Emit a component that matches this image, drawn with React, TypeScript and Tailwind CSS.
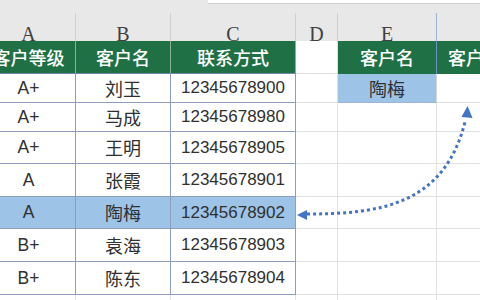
import React from "react";

const GRID = "grid grid-cols-[94px_95px_125px_42px_99px_100px]";
const cjk = { fontFamily: '"Noto Sans CJK SC", "Noto Sans", sans-serif' };
const lat = { fontFamily: '"Liberation Sans", Arial, "Noto Sans CJK SC", sans-serif' };

const rows: { g: string; n: string; p: string; h: string; sel?: boolean; e?: string }[] = [
  { g: "A+", n: "刘玉", p: "12345678900", h: "h-[29px]", e: "陶梅" },
  { g: "A+", n: "马成", p: "12345678980", h: "h-[29px]" },
  { g: "A+", n: "王明", p: "12345678905", h: "h-[32px]" },
  { g: "A", n: "张霞", p: "12345678901", h: "h-[33px]" },
  { g: "A", n: "陶梅", p: "12345678902", h: "h-[32px]", sel: true },
  { g: "B+", n: "袁海", p: "12345678903", h: "h-[33px]" },
  { g: "B+", n: "陈东", p: "12345678904", h: "h-[33px]" },
];

export default function App() {
  const letters = ["A", "B", "C", "D", "E", "F"];
  return (
    <div className="relative w-[480px] h-[300px] overflow-hidden bg-white">
      <div className="ml-[-18px] w-[555px]">
        {/* top strip */}
        <div className="flex h-[4px] bg-[#e8e8e8]">
          <div className="w-[226px]" />
          <div className="flex-1 bg-white border-b border-[#cfcfcf]" />
        </div>
        {/* column letters */}
        <div className={`${GRID} h-[37px] bg-[#e8e8e8]`}>
          {letters.map((l) => (
            <div key={l} className="flex flex-col">
              <div className="h-[9px]" />
              <div
                className={`flex-1 flex items-center justify-center pt-[6px] border-r ${l === "E" ? "border-[#9fb2d4]" : "border-[#d0d0d0]"} text-[20px] text-[#404040]`}
                style={{ fontFamily: '"Liberation Serif", "DejaVu Serif", serif' }}
              >
                {l}
              </div>
            </div>
          ))}
        </div>
        {/* green header */}
        <div className={`${GRID} h-[33px]`} style={cjk}>
          {["客户等级", "客户名", "联系方式"].map((t) => (
            <div
              key={t}
              className="bg-[#1f7145] text-white text-[18px] font-medium flex items-center justify-center border-r border-b border-r-[#8db09c] border-b-[#6f86a8]"
            >
              {t}
            </div>
          ))}
          <div className="bg-white border-r border-b border-[#e0e0e0]" />
          <div className="bg-[#1f7145] text-white text-[18px] font-medium flex items-center justify-center border-r border-r-[#6d8fc4]">
            客户名
          </div>
          <div className="bg-[#1f7145] text-white text-[18px] font-medium flex items-center justify-start pl-[11px]">
            客户等级
          </div>
        </div>
        {/* data rows */}
        {rows.map((r, i) => {
          const bg = r.sel ? "bg-[#9dc3e6]" : "bg-white";
          const tb = "border-r border-b border-[#8f9dbd]";
          return (
            <div key={i} className={`${GRID} ${r.h} text-[#303030]`}>
              <div className={`${bg} ${tb} flex items-center justify-center text-[17.5px]`} style={lat}>
                {r.g}
              </div>
              <div className={`${bg} ${tb} flex items-center justify-center text-[18px]`} style={cjk}>
                {r.n}
              </div>
              <div className={`${bg} ${tb} flex items-center justify-center text-[17px]`} style={lat}>
                {r.p}
              </div>
              <div className="border-r border-b border-[#e0e0e0]" />
              {r.e ? (
                <div
                  className="bg-[#9dc3e6] border-r border-r-[#d6d6d6] border-b border-b-[#9db4d8] flex items-center justify-center text-[18px]"
                  style={cjk}
                >
                  {r.e}
                </div>
              ) : (
                <div className="border-r border-b border-[#e0e0e0]" />
              )}
              <div className="border-r border-b border-[#e0e0e0]" />
            </div>
          );
        })}
        <div className={`${GRID} h-[33px]`}>
          {letters.map((l) => (
            <div key={l} className="border-r border-b border-[#e0e0e0]" />
          ))}
        </div>
      </div>
      {/* dotted arrow overlay */}
      <svg className="absolute left-0 top-0 pointer-events-none" width="480" height="300" viewBox="0 0 480 300">
        <path
          d="M 307 214 C 380 214, 445 205, 465.5 120"
          fill="none"
          stroke="#4472c4"
          strokeWidth="3"
          strokeDasharray="3 3"
        />
        <polygon points="297,215 307,210 307,220" fill="#4472c4" />
        <polygon points="467.5,106 461.5,117 472.5,118" fill="#4472c4" />
      </svg>
    </div>
  );
}
